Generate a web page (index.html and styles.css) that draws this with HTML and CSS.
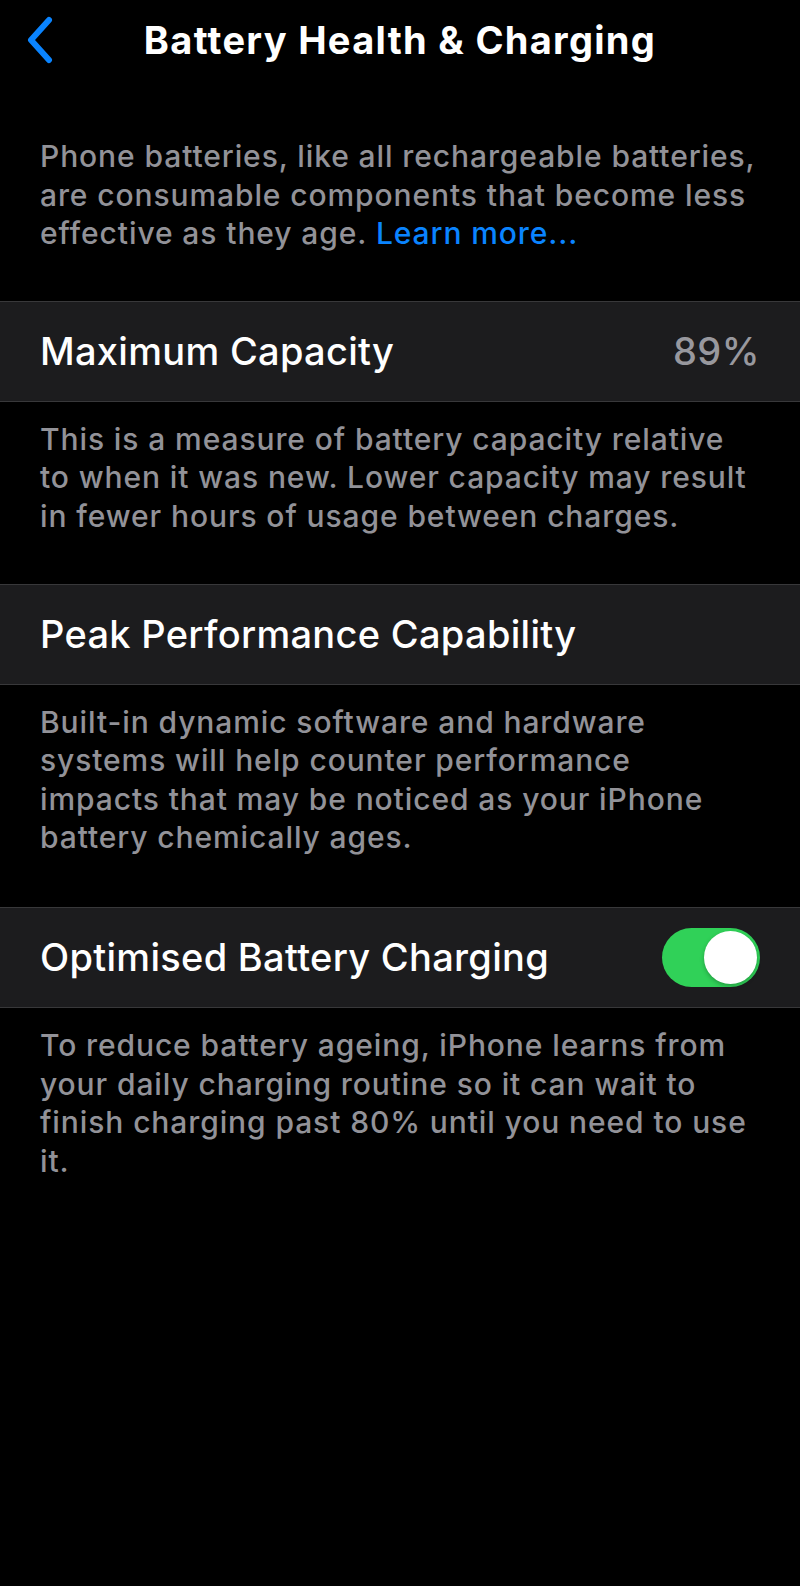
FILE: index.html
```html
<!DOCTYPE html>
<html lang="en">
<head>
<meta charset="utf-8">
<title>Battery Health &amp; Charging</title>
<link rel="stylesheet" href="styles.css">
</head>
<body>
<div class="screen">
  <header class="nav">
    <div class="nav-left">
      <svg class="back" width="28" height="48" viewBox="0 0 28 48" aria-hidden="true">
        <path d="M23 4 L5 24 L23 44" fill="none" stroke="#0a84ff" stroke-width="6" stroke-linecap="round" stroke-linejoin="round"/>
      </svg>
    </div>
    <h1 class="title">Battery Health &amp; Charging</h1>
    <div class="nav-right"></div>
  </header>

  <p class="desc desc-intro">Phone batteries, like all rechargeable batteries, are consumable components that become less effective as they age. <span class="link">Learn more...</span></p>

  <div class="row">
    <span class="label">Maximum Capacity</span>
    <span class="value">89%</span>
  </div>
  <p class="desc">This is a measure of battery capacity relative to when it was new. Lower capacity may result in fewer hours of usage between charges.</p>

  <div class="row">
    <span class="label">Peak Performance Capability</span>
  </div>
  <p class="desc desc-long">Built-in dynamic software and hardware systems will help counter performance<br>impacts that may be noticed as your iPhone battery chemically ages.</p>

  <div class="row">
    <span class="label">Optimised Battery Charging</span>
    <span class="toggle"><span class="thumb"></span></span>
  </div>
  <p class="desc">To reduce battery ageing, iPhone learns from your daily charging routine so it can wait to finish charging past 80% until you need to use it.</p>
</div>
</body>
</html>
```

FILE: styles.css
```css
html, body {
  margin: 0;
  padding: 0;
  background: #000;
}
body {
  font-family: Inter, "Noto Sans", "Liberation Sans", sans-serif;
  color: #fff;
  width: 800px;
  min-height: 1586px;
}
.screen {
  display: flex;
  flex-direction: column;
}
.nav {
  height: 80px;
  display: grid;
  grid-template-columns: 1fr auto 1fr;
  align-items: center;
}
.nav-left {
  display: flex;
  align-items: center;
  padding-left: 26px;
}
.back {
  display: block;
}
.title {
  margin: 0;
  font-size: 38px;
  font-weight: 700;
  letter-spacing: 1.3px;
  line-height: 1;
  color: #fff;
}
.desc {
  margin: 0;
  padding: 18px 40px 48px 40px;
  font-size: 30px;
  font-weight: 500;
  letter-spacing: 0.9px;
  line-height: 38.6px;
  color: #929298;
}
.desc-intro {
  padding-top: 57px;
}
.desc-long {
  padding-bottom: 50px;
}
.link {
  color: #0a84ff;
}
.row {
  height: 99px;
  background: #1c1c1e;
  border-top: 1px solid #38383a;
  border-bottom: 1px solid #38383a;
  box-sizing: content-box;
  padding: 0 40px;
  display: flex;
  align-items: center;
  justify-content: space-between;
}
.label {
  font-size: 38px;
  font-weight: 500;
  letter-spacing: 0.3px;
  color: #fff;
}
.value {
  font-size: 38px;
  font-weight: 500;
  letter-spacing: 0.5px;
  color: #98989e;
}
.toggle {
  width: 98px;
  height: 59px;
  border-radius: 30px;
  background: #30d158;
  display: flex;
  align-items: center;
  justify-content: flex-end;
  padding: 0 3px;
  box-sizing: border-box;
}
.thumb {
  width: 53px;
  height: 53px;
  border-radius: 50%;
  background: #fff;
  box-shadow: 0 2px 4px rgba(0,0,0,0.25);
}
```
